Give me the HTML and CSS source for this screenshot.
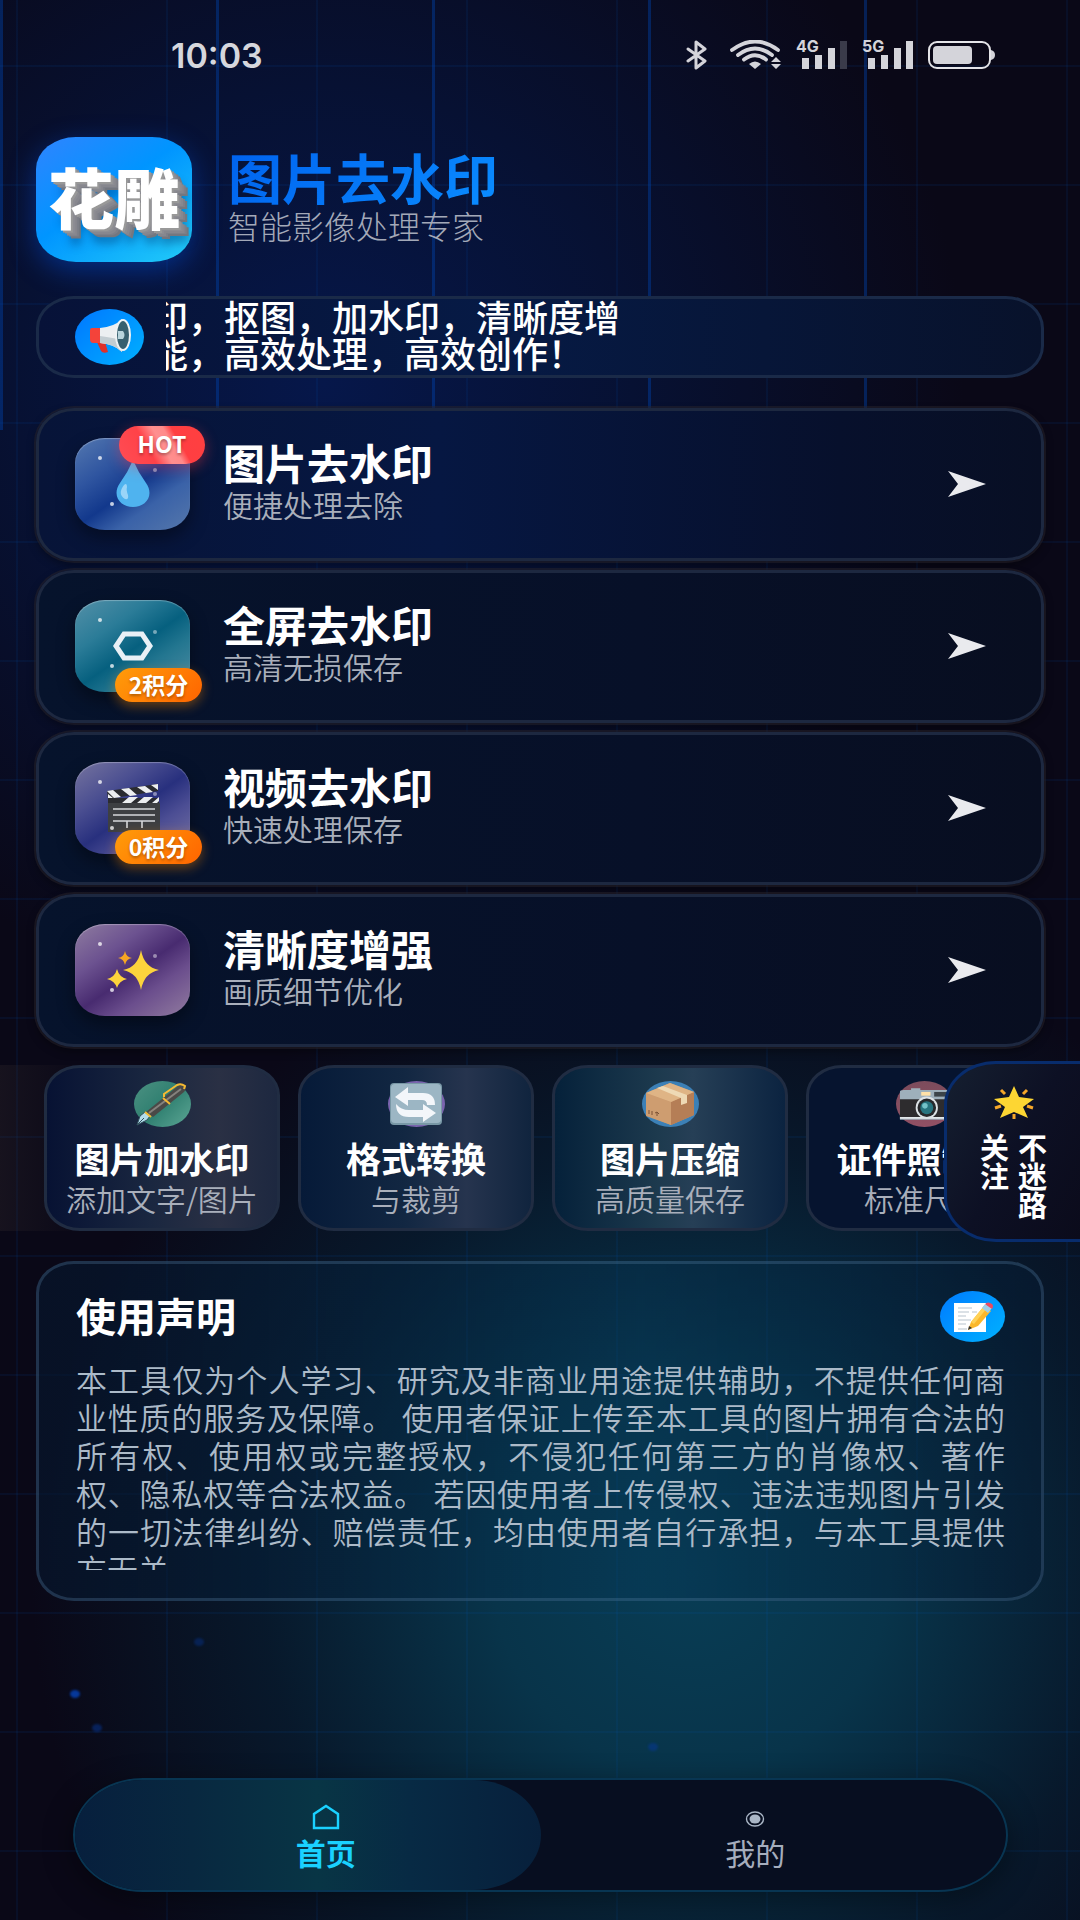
FILE: index.html
```html
<!DOCTYPE html>
<html lang="zh-CN">
<head>
    <meta charset="UTF-8">
    <meta name="viewport" content="width=device-width, initial-scale=1.0">
    <title>图片去水印</title>
    <link rel="stylesheet" href="styles.css">
</head>
<body>
    <!-- background -->
    <div class="streams"><i></i><i></i><i></i><i></i><i></i></div>
    <span class="particle p1"></span>
    <span class="particle p2"></span>
    <span class="particle p3"></span>
    <span class="particle p4"></span>

    <div class="page">
        <div class="status-bar">
            <span class="time">10:03</span>
            <div class="status-icons">
                <svg width="22" height="30" viewBox="0 0 22 30" fill="none" stroke="#d4d4da" stroke-width="3" stroke-linejoin="round" stroke-linecap="round"><path d="M2 9l17 12-9 7V2l9 7L2 21"/></svg>
                <svg class="wifi" width="52" height="30" viewBox="0 0 52 30" fill="none" stroke="#d4d4da" stroke-width="3.8" stroke-linecap="round"><path d="M2 10Q25-7 48 10M8 15Q25 2 42 15M14 19.500Q25 11 36 19.500"/><path d="M19 24q6-5 12 0l-6 5z" fill="#d4d4da" stroke="none"/><path d="M41 22l5-5 5 5zM41 24h10l-5 5z" fill="#d4d4da" stroke="none"/></svg>
                <div class="signal">
                    <span>4G</span>
                    <svg width="46" height="30" viewBox="0 0 46 30" fill="#d4d4da"><path d="M0 18h7v11H0zM13 15h7v14h-7zM26 8h7v21h-7z"/><path d="M38 1h7v28h-7z" fill="#3a3b4a"/></svg>
                </div>
                <div class="signal">
                    <span>5G</span>
                    <svg width="46" height="30" viewBox="0 0 46 30" fill="#d4d4da"><path d="M0 18h7v11H0zM13 15h7v14h-7zM26 8h7v21h-7zM38 1h7v28h-7z"/></svg>
                </div>
                <svg class="battery" width="68" height="28" viewBox="0 0 68 28"><rect x="1" y="1" width="61" height="26" rx="8" fill="none" stroke="#e4e4e8" stroke-width="2"/><rect x="5" y="5" width="39" height="18" rx="4" fill="#d4d4da"/><path d="M63 9q4 1 4 5t-4 5z" fill="#d4d4da"/></svg>
            </div>
        </div>

        <header class="header">
            <div class="logo">花雕</div>
            <div class="header-text">
                <h1>图片去水印</h1>
                <p>智能影像处理专家</p>
            </div>
        </header>

        <section class="notice">
            <div class="notice-icon">
                <svg width="44" height="36" viewBox="0 0 44 36">
                    <path d="M9 23h8l3 10q-5 2-7-1z" fill="#e02f28"/>
                    <path d="M2 11q0-2 2-2h9v15H5q-3 0-3-4z" fill="#f4433a"/>
                    <path d="M12 9q14-1 22-9v33q-8-8-22-9z" fill="#eceff1"/>
                    <path d="M12 17q14 2 22 4v12q-8-8-22-9z" fill="#c3cdd2"/>
                    <ellipse cx="35" cy="16" rx="7" ry="15" fill="#37606f" stroke="#eef2f4" stroke-width="2"/>
                    <path d="M30 12h5q3 4 0 8h-5z" fill="#b8d4dc"/>
                </svg>
            </div>
            <div class="notice-window">
                <p>印，抠图，加水印，清晰度增<br>能，高效处理，高效创作！</p>
            </div>
        </section>

        <main class="card-list">
            <button class="card" type="button">
                <span class="tile blue">
                    <i class="dot d1"></i><i class="dot d2"></i><i class="dot d3"></i>
                    <svg width="36" height="48" viewBox="0 0 36 48"><path d="M18 0q5 12 13 23c9 13-1 24-13 24S-4 36 5 23Q13 12 18 0z" fill="#4fb3ef"/><path d="M9 25q-7 9 1 14 4 1 3-4-2-5-1-8 0-5-3-2z" fill="#9bd5f8"/></svg>
                    <span class="badge hot">HOT</span>
                </span>
                <span class="card-text"><strong>图片去水印</strong><small>便捷处理去除</small></span>
                <svg class="arrow" width="38" height="26" viewBox="0 0 38 26"><path d="M0 0l38 13L0 26l10-13z" fill="#e9eaee"/></svg>
            </button>
            <button class="card" type="button">
                <span class="tile teal">
                    <i class="dot d1"></i><i class="dot d2"></i><i class="dot d3"></i>
                    <svg width="40" height="30" viewBox="0 0 40 30"><path d="M11 3h18l8 12-8 12H11L3 15z" fill="none" stroke="#e9f0f6" stroke-width="5"/></svg>
                    <span class="badge points">2积分</span>
                </span>
                <span class="card-text"><strong>全屏去水印</strong><small>高清无损保存</small></span>
                <svg class="arrow" width="38" height="26" viewBox="0 0 38 26"><path d="M0 0l38 13L0 26l10-13z" fill="#e9eaee"/></svg>
            </button>
            <button class="card" type="button">
                <span class="tile indigo">
                    <i class="dot d1"></i><i class="dot d2"></i><i class="dot d3"></i>
                    <svg width="56" height="48" viewBox="0 0 56 48">
                        <path d="M3 19h52v29H3z" fill="#3d3f42"/>
                        <path d="M2 7L53 0v7L3 15z" fill="#2b2c30"/>
                        <path d="M2 7l6-1 8 7-7 1zM16 5l8-1 8 7-7 1zM32 3l8-1 8 6-7 1zM46 1l7-1v6zM3 10l5 4-5 5z" fill="#eceef0"/>
                        <path d="M3 14h51v5H3z" fill="#2b2c30"/>
                        <path d="M24 13h9l-7 6h-9zM39 13h9l-7 6h-9zM54 13v4l-2 2h-5z" fill="#eceef0"/>
                        <path d="M8 25h42M8 31h42M8 37h42M22 37v7M37 37v7" stroke="#d5d7da" stroke-width="1.600"/>
                    </svg>
                    <span class="badge points">0积分</span>
                </span>
                <span class="card-text"><strong>视频去水印</strong><small>快速处理保存</small></span>
                <svg class="arrow" width="38" height="26" viewBox="0 0 38 26"><path d="M0 0l38 13L0 26l10-13z" fill="#e9eaee"/></svg>
            </button>
            <button class="card" type="button">
                <span class="tile purple">
                    <i class="dot d1"></i><i class="dot d2"></i><i class="dot d3"></i>
                    <svg width="52" height="40" viewBox="0 0 52 40"><path d="M34 0q3 17 18 20-15 3-18 20-3-17-18-20 15-3 18-20z" fill="#fcd33c"/><path d="M10 19q2 8 10 10-8 2-10 9-2-7-10-9 8-2 10-10z" fill="#fcd33c"/><path d="M18 1q1 6 7 7-6 1-7 7-1-6-7-7 6-1 7-7z" fill="#f6a623"/></svg>
                </span>
                <span class="card-text"><strong>清晰度增强</strong><small>画质细节优化</small></span>
                <svg class="arrow" width="38" height="26" viewBox="0 0 38 26"><path d="M0 0l38 13L0 26l10-13z" fill="#e9eaee"/></svg>
            </button>
        </main>

        <section class="tools">
            <button class="tool" type="button">
                <span class="tool-icon green">
                    <svg width="52" height="44" viewBox="0 0 52 44"><path d="M1 43l3-9 5-4 5 4-3 4z" fill="#b3dcec" stroke="#31505c"/><path d="M1 43l7-7" stroke="#31505c"/><path d="M10 30L42 4q5-2 7 0 2 2-1 6L17 35z" fill="#4a4947"/><path d="M13 31L45 7" stroke="#85827d" stroke-width="2"/><path d="M9 30l6 5M27 16l7 6M28 15l0-3L41 3q4-2 8 1l-1 3" fill="none" stroke="#f5b932" stroke-width="2"/></svg>
                </span>
                <strong>图片加水印</strong><small>添加文字/图片</small>
            </button>
            <button class="tool" type="button">
                <span class="tool-icon violet">
                    <svg width="52" height="42" viewBox="0 0 52 42"><rect width="52" height="42" rx="4" fill="#7897a5"/><rect x="1" y="1" width="50" height="39" rx="4" fill="#9cb6c4"/><path d="M5 14L18 4v6h15q12 0 12 12h-8q0-5-5-5H18v6z" fill="#f3f6fa"/><path d="M46 30L33 39v-5H19Q6 34 6 21q5 6 13 6h14v-6z" fill="#f3f6fa"/></svg>
                </span>
                <strong>格式转换</strong><small>与裁剪</small>
            </button>
            <button class="tool" type="button">
                <span class="tool-icon sky">
                    <svg width="48" height="44" viewBox="0 0 48 44"><path d="M0 11L24 1l24 9v23L25 43 0 33z" fill="#c4936a"/><path d="M0 11l25 9v23L0 34z" fill="#ce9d70"/><path d="M25 20l23-10v23L25 43z" fill="#b57e56"/><path d="M0 11L24 1l24 9-23 10z" fill="#dfb485"/><path d="M11 6l6-2 24 9v8l-6 2v-7z" fill="#eed9b5"/><path d="M3 28v4M6 29v4M11 30v4m-2-3l2-1 2 2" fill="none" stroke="#7a5134"/></svg>
                </span>
                <strong>图片压缩</strong><small>高质量保存</small>
            </button>
            <button class="tool" type="button">
                <span class="tool-icon rose">
                    <svg width="50" height="36" viewBox="0 0 54 36"><path d="M5 3h8V1h10v2h31v32H1V5q0-2 4-2z" fill="#9eb0bb"/><path d="M1 13h53v19H1z" fill="#2d2c2e"/><path d="M1 33h53" stroke="#e3e8eb" stroke-width="2"/><rect x="24" y="5" width="10" height="4" fill="#ffe2a8"/><rect x="38" y="5" width="14" height="5" fill="#3b4449"/><circle cx="30" cy="22" r="12" fill="#dde3e6"/><circle cx="30" cy="22" r="10" fill="#26282b"/><circle cx="30" cy="22" r="7" fill="#27747f"/><circle cx="28" cy="20" r="3" fill="#74c2c8"/></svg>
                </span>
                <strong>证件照制作</strong><small>标准尺寸</small>
            </button>
        </section>

        <section class="statement">
            <div class="statement-head">
                <h2>使用声明</h2>
                <span class="statement-icon">
                    <svg width="40" height="32" viewBox="0 0 40 32"><path d="M1 2h32v29H1z" fill="#fff"/><path d="M5 7h14M5 11h11M19 11h5M5 15h8M5 19h13M5 23h8M5 28h9" stroke="#b7c3cd"/><path d="M15 29l3-8L31 5l7 5-13 15z" fill="#fbb72a"/><path d="M18 21L31 5l3 2-13 16z" fill="#ffd257"/><path d="M15 29l1-4 3 2z" fill="#333"/><path d="M29 7l3-4 7 4-4 5z" fill="#9fd0ea"/><path d="M32 3q3-3 7 0 2 2 0 5z" fill="#ed4a60"/></svg>
                </span>
            </div>
            <p>本工具仅为个人学习、研究及非商业用途提供辅助，不提供任何商业性质的服务及保障。 使用者保证上传至本工具的图片拥有合法的所有权、使用权或完整授权，不侵犯任何第三方的肖像权、著作权、隐私权等合法权益。 若因使用者上传侵权、违法违规图片引发的一切法律纠纷、赔偿责任，均由使用者自行承担，与本工具提供方无关</p>
        </section>

        <nav class="tab-bar">
            <a class="tab active" href="#home">
                <svg width="28" height="26" viewBox="0 0 28 26"><path d="M2 24V10L14 2l12 8v14z" fill="none" stroke="#1ad1ff" stroke-width="2.400"/></svg>
                <span>首页</span>
            </a>
            <a class="tab" href="#mine">
                <svg width="28" height="26" viewBox="0 0 28 26"><ellipse cx="14" cy="15" rx="8.500" ry="7" fill="none" stroke="#aab6c6" stroke-width="1.400"/><ellipse cx="14" cy="15" rx="5.500" ry="4.600" fill="#aab6c6"/></svg>
                <span>我的</span>
            </a>
        </nav>
    </div>

    <button class="follow" type="button">
        <svg width="40" height="33" viewBox="0 0 40 33"><path d="M20 0l5 11 15 2-11 8 5 11-14-6-14 6 5-11L0 13l15-2z" fill="#fdd633"/><path d="M7 4l4 4M33 4l-4 4M1 22l6-2M39 22l-6-2M20 28v5" stroke="#f6a72a" stroke-width="3"/></svg>
        <span>关注<br>不迷路</span>
    </button>
</body>
</html>
```
FILE: styles.css
```css
* {
    margin: 0;
    padding: 0;
    box-sizing: border-box;
}

body {
    position: relative;
    min-height: 100vh;
    overflow-x: hidden;
    font-family: "Noto Sans CJK SC", "Noto Sans", sans-serif;
    color: white;
    background:
        linear-gradient(90deg, rgba(0, 90, 200, 0.09) 2px, transparent 2px) 16px 0 / 150px 119px,
        linear-gradient(rgba(0, 90, 200, 0.09) 2px, transparent 2px) 0 65px / 150px 119px,
        radial-gradient(ellipse 660px 660px at 64% 82%, #083d55 0%, #08344a 30%, rgba(7, 30, 50, 0.75) 65%, transparent 100%),
        radial-gradient(ellipse 640px 620px at 30% 20%, #06174a 0%, rgba(6, 20, 60, 0.8) 45%, transparent 100%),
        #0a0817;
}

button {
    font-family: inherit;
    color: inherit;
    border: none;
    cursor: pointer;
}

.page {
    display: flex;
    flex-direction: column;
    min-height: 100vh;
    padding: 0 36px 28px;
}

/* vertical light streams */
.streams {
    position: absolute;
    z-index: -1;
    top: 0;
    left: 0;
    width: 100%;
    height: 430px;
    display: flex;
}

.streams i {
    flex: 1;
    border-left: 3px solid rgba(0, 70, 180, 0.4);
}

.particle {
    position: absolute;
    z-index: -1;
    width: 10px;
    height: 8px;
    border-radius: 50%;
    background: #06389a;
    filter: blur(1px);
}

.p1 { left: 6.5%; top: 88%; }
.p2 { left: 8.5%; top: 89.8%; opacity: 0.5; }
.p3 { left: 18%; top: 85.3%; opacity: 0.4; }
.p4 { left: 60%; top: 90.8%; opacity: 0.5; }

/* status bar */
.status-bar {
    display: flex;
    justify-content: space-between;
    align-items: center;
    height: 110px;
    padding: 0 48px 0 135px;
}

.time {
    font-family: Inter, sans-serif;
    font-size: 34px;
    font-weight: 600;
    color: #d6d7dd;
}

.status-icons {
    display: flex;
    align-items: center;
}

.wifi { margin: 0 14px 0 22px; }

.signal {
    position: relative;
    display: flex;
    padding-left: 6px;
    margin-right: 14px;
}

.signal span {
    position: absolute;
    left: 0;
    top: -3px;
    font: 700 16px/18px Inter, sans-serif;
    color: #d4d4da;
}

/* header */
.header {
    display: flex;
    align-items: center;
    gap: 36px;
    margin-top: 27px;
}

.header-text { padding-bottom: 5px; }

.logo {
    width: 156px;
    height: 125px;
    border-radius: 40px / 32px;
    background: linear-gradient(145deg, #2a86ff 5%, #0095ff 45%, #22ccf8 100%);
    box-shadow: 0 8px 28px rgba(0, 90, 255, 0.4);
    font-size: 66px;
    font-weight: 900;
    line-height: 117px;
    text-align: center;
    text-shadow: 2px 2px 0 #999, 4px 3px 0 #8d8d93, 6px 5px 0 #87878e, 8px 6px 0 #7d7f88, 10px 8px 0 #74777f, 10px 14px 10px rgba(0, 40, 90, 0.4);
}

.header h1 {
    font-size: 54px;
    line-height: 56px;
    background: linear-gradient(135deg, #0062ee, #0a8cff);
    -webkit-background-clip: text;
    background-clip: text;
    color: transparent;
}

.header p {
    font-size: 32px;
    font-weight: 300;
    line-height: 40px;
    color: #a3a9b8;
}

/* notice */
.notice {
    display: flex;
    align-items: center;
    gap: 22px;
    height: 82px;
    margin-top: 34px;
    padding: 0 36px;
    border: 3px solid #1a2a48;
    border-radius: 38px / 32px;
    background: linear-gradient(90deg, #071238, #061a45 45%, #08122b);
    overflow: hidden;
}

.notice-icon {
    display: flex;
    justify-content: center;
    align-items: center;
    width: 69px;
    height: 56px;
    border-radius: 50%;
    background: linear-gradient(135deg, #0077ff, #00b0ff);
}

.notice-window {
    flex: 1;
    overflow: hidden;
}

.notice p {
    margin-left: -14px;
    padding-bottom: 7px;
    font-size: 36px;
    font-weight: 500;
    line-height: 36px;
    white-space: nowrap;
}

/* main cards */
.card-list {
    display: flex;
    flex-direction: column;
    gap: 9px;
    margin-top: 30px;
}

.card {
    display: flex;
    align-items: center;
    height: 153px;
    padding: 0 55px 2px 36px;
    border: 3px solid #1d2840;
    border-radius: 38px / 34px;
    background: linear-gradient(90deg, #06132c, #071028 60%, #080e20);
    box-shadow: 0 0 0 2px rgba(40, 36, 44, 0.5), 0 4px 10px rgba(0, 0, 0, 0.4);
    text-align: left;
}

.card:first-child {
    background: linear-gradient(90deg, #071438, #061742 40%, #07102c 80%, #080f24);
}

.card-text {
    flex: 1;
    margin-left: 33px;
    padding-bottom: 3px;
}

.card strong,
.card small {
    display: block;
}

.card strong {
    font-size: 42px;
    line-height: 44px;
}

.card small {
    font-size: 30px;
    font-weight: 350;
    line-height: 40px;
    color: #a9afbb;
}

.tile {
    position: relative;
    display: flex;
    justify-content: center;
    align-items: center;
    width: 115px;
    height: 92px;
    border-radius: 30px / 25px;
    box-shadow: 0 8px 18px rgba(0, 0, 0, 0.4), inset 0 1px 1px rgba(255, 255, 255, 0.3);
}

.blue { background: linear-gradient(145deg, #5478b0, #2f55a0 30%, #12388c 52%, #3a62a8 70%, #5577ab); }
.teal { background: linear-gradient(145deg, #5490a8, #2b7c98 30%, #06607f 52%, #237690 68%, #528fa5); }
.indigo { background: linear-gradient(145deg, #76749f, #4b4f91 30%, #28307e 52%, #4c4e94 70%, #7874a4); }
.purple { background: linear-gradient(145deg, #8f7ca0, #6c5290 30%, #482b70 52%, #6b4e8d 70%, #917b9f); }

.dot {
    position: absolute;
    width: 4px;
    height: 4px;
    border-radius: 50%;
    background: rgba(255, 255, 255, 0.75);
}

.d1 { left: 23px; top: 18px; }
.d2 { left: 78px; top: 30px; opacity: 0.6; }
.d3 { left: 35px; top: 64px; }

.badge {
    position: absolute;
    border-radius: 20px;
    font-size: 23px;
    font-weight: 700;
    text-align: center;
    text-shadow: 0 2px 3px rgba(0, 0, 0, 0.3);
}

.hot {
    right: -15px;
    top: -12px;
    width: 86px;
    height: 38px;
    line-height: 34px;
    background: linear-gradient(60deg, #ff4d55 0%, #ff4248 35%, #ff8f8f 50%, #ff8a8a 60%, #ff3e42 68%, #ff4040 100%);
    box-shadow: 0 4px 14px rgba(255, 60, 70, 0.4);
}

.points {
    right: -12px;
    bottom: -10px;
    width: 87px;
    height: 34px;
    line-height: 32px;
    background: linear-gradient(135deg, #ff9d0a, #ff6400);
    box-shadow: 0 4px 12px rgba(255, 140, 0, 0.4);
}

.tools {
    display: flex;
    gap: 18px;
    margin: 18px -36px 0;
    padding: 0 44px;
    overflow: hidden;
    background: linear-gradient(90deg, rgba(60, 50, 50, 0.25), transparent 8%);
}

.tool {
    display: flex;
    flex: none;
    flex-direction: column;
    align-items: center;
    width: 236px;
    padding: 13px 0 12px;
    border: 3px solid #202c42;
    border-radius: 36px / 30px;
    background: linear-gradient(90deg, #071233, #1a2740 45%, #2a3044 75%, #1d2840);
}

.tool:nth-child(2) { background: linear-gradient(90deg, #061a38, #122742 45%, #26344e 72%, #10243e); }
.tool:nth-child(3) { background: linear-gradient(90deg, #05213a, #1d3a4e 45%, #263f56 60%, #0b2340); }
.tool:nth-child(4) { background: #06142f; }

.tool strong {
    margin-top: 9px;
    font-size: 35px;
    line-height: 44px;
    white-space: nowrap;
}

.tool small {
    font-size: 30px;
    font-weight: 350;
    line-height: 36px;
    color: #a9afbb;
    white-space: nowrap;
}

.tool-icon {
    display: flex;
    justify-content: center;
    align-items: center;
    width: 57px;
    height: 46px;
    border-radius: 50%;
}

.green { background: linear-gradient(135deg, #4c9182, #2f7f70 50%, #5da795); }
.violet { background: #7a64ae; }
.sky { background: #3c80b6; }
.rose { background: linear-gradient(#7c4c5c, #915064); }

/* statement */
.statement {
    margin-top: 30px;
    padding: 27px 36px 28px 37px;
    border: 3px solid rgba(90, 130, 165, 0.3);
    border-radius: 38px / 32px;
    background: linear-gradient(90deg, rgba(6, 24, 48, 0.6), rgba(5, 55, 88, 0.35) 60%, rgba(6, 28, 52, 0.5));
}

.statement-head {
    display: flex;
    justify-content: space-between;
    align-items: center;
}

.statement h2 {
    padding-bottom: 4px;
    font-size: 40px;
    line-height: 46px;
}

.statement-icon {
    display: flex;
    justify-content: center;
    align-items: center;
    width: 65px;
    height: 51px;
    border-radius: 50%;
    background: linear-gradient(135deg, #007bff, #00b2ff);
}

.statement p {
    height: 210px;
    margin-top: 18px;
    overflow: hidden;
    font-size: 31px;
    font-weight: 350;
    line-height: 38px;
    text-align: justify;
    color: #acbac8;
}

/* bottom tabs */
.tab-bar {
    display: flex;
    height: 114px;
    margin: auto 36px 0 37px;
    border: 2px solid #083552;
    border-radius: 70px / 57px;
    background: #070e20;
    box-shadow: 0 8px 30px rgba(0, 0, 0, 0.4);
}

.tab {
    display: flex;
    flex: 1;
    flex-direction: column;
    justify-content: center;
    align-items: center;
    gap: 4px;
    padding: 4px 36px 0 0;
    font-size: 30px;
    line-height: 36px;
    color: #a5adbd;
    text-decoration: none;
}

.tab.active {
    padding: 4px 0 0 36px;
    border-radius: 70px / 57px;
    background: linear-gradient(90deg, #071f3d, #082840 25%, #083545 52%, #072a44 72%, #07203c);
    color: #1ad1ff;
    font-weight: 700;
}

/* follow button on the right edge */
.follow {
    position: absolute;
    right: 0;
    top: 1061px;
    display: flex;
    flex-direction: column;
    align-items: center;
    gap: 14px;
    width: 136px;
    height: 181px;
    padding: 22px 0 0 0;
    border: 3px solid #082c6c;
    border-right: none;
    border-radius: 52px 0 0 52px / 44px 0 0 44px;
    background: linear-gradient(120deg, #151f30, #0d1024 50%, #0b0b1b);
}

.follow span {
    writing-mode: vertical-lr;
    font-size: 29px;
    font-weight: 700;
    line-height: 38px;
    text-align: left;
}
```
